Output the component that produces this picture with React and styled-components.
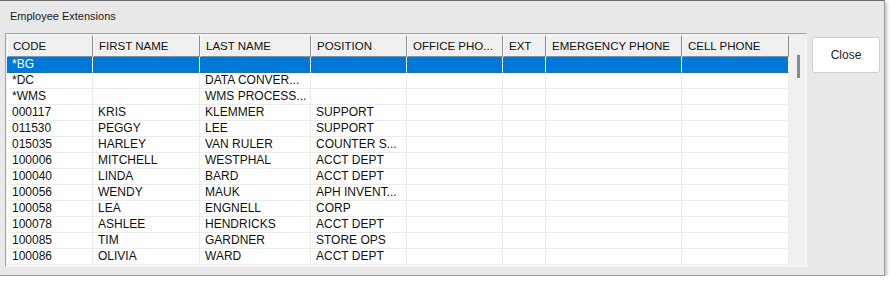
import React from 'react';
import styled, { createGlobalStyle } from 'styled-components';

const Global = createGlobalStyle`
  html, body { margin: 0; padding: 0; background: #ffffff; }
  body { font-family: "Liberation Sans", Arial, sans-serif; }
`;

const Window = styled.div`
  width: 884px;
  height: 274px;
  background: #e8e8e8;
  border-top: 1px solid #6e6e6e;
  border-right: 1px solid #9a9a9a;
  border-bottom: 1px solid #9a9a9a;
  box-shadow: 2px 2px 3px rgba(0, 0, 0, 0.25);
  display: flex;
  flex-direction: column;
`;

const Title = styled.div`
  height: 32px;
  padding-left: 10px;
  display: flex;
  align-items: center;
  font-size: 11px;
  color: #1a1a1a;
  box-sizing: border-box;
  padding-bottom: 3px;
`;

const Content = styled.div`
  display: flex;
  padding-left: 5px;
  gap: 5px;
`;

const Grid = styled.div`
  width: 802px;
  height: 234px;
  box-sizing: border-box;
  border: 1px solid #a3a3a3;
  border-right-color: #f6f6f6;
  border-bottom-color: #f6f6f6;
  background: #f0f0f0;
  display: flex;
  padding: 1px 0 0 1px;
`;

const TableArea = styled.div`
  width: 782px;
  display: flex;
  flex-direction: column;
  background: #fff;
`;

const HeaderRow = styled.div`
  display: flex;
  height: 22px;
  background: #f0f0f0;
`;

const HeaderCell = styled.div`
  width: ${p => p.w}px;
  box-sizing: border-box;
  border-right: 1px solid #8e8e8e;
  border-bottom: 1px solid #8e8e8e;
  border-top: 1px solid #fafafa;
  border-left: 1px solid #fafafa;
  padding-left: 5px;
  font-size: 11.5px;
  color: #111;
  display: flex;
  align-items: center;
  white-space: nowrap;
  overflow: hidden;
`;

const Row = styled.div`
  display: flex;
  height: 16px;
  background: ${p => (p.selected ? '#0078d7' : '#ffffff')};
  color: ${p => (p.selected ? '#ffffff' : '#111111')};
`;

const Cell = styled.div`
  width: ${p => p.w}px;
  box-sizing: border-box;
  border-right: 1px solid ${p => (p.selected ? '#ffffff' : '#ececec')};
  border-bottom: 1px solid ${p => (p.selected ? '#0078d7' : '#ececec')};
  padding-left: 5px;
  font-size: 12px;
  line-height: 15px;
  white-space: nowrap;
  overflow: hidden;
`;

const BottomStrip = styled.div`
  flex: 1;
  background: #ececec;
  border-top: 1px solid #f8f8f8;
`;

const VScroll = styled.div`
  width: 17px;
  background: #f0f0f0;
  position: relative;
`;

const Thumb = styled.div`
  position: absolute;
  left: 8px;
  top: 20px;
  width: 3px;
  height: 23px;
  background: #8a8a8a;
`;

const Side = styled.div`
  padding-top: 4px;
`;

const CloseButton = styled.button`
  width: 68px;
  height: 36px;
  background: #ffffff;
  border: 1px solid #cfcfcf;
  border-radius: 3px;
  font-family: "Liberation Sans", Arial, sans-serif;
  font-size: 12px;
  color: #222;
  padding: 0;
`;

const cols = [
  { name: 'CODE', w: 86 },
  { name: 'FIRST NAME', w: 107 },
  { name: 'LAST NAME', w: 111 },
  { name: 'POSITION', w: 96 },
  { name: 'OFFICE PHO...', w: 96 },
  { name: 'EXT', w: 43 },
  { name: 'EMERGENCY PHONE', w: 136 },
  { name: 'CELL PHONE', w: 107 },
];

const rows = [
  ['*BG', '', '', ''],
  ['*DC', '', 'DATA CONVER...', ''],
  ['*WMS', '', 'WMS PROCESS...', ''],
  ['000117', 'KRIS', 'KLEMMER', 'SUPPORT'],
  ['011530', 'PEGGY', 'LEE', 'SUPPORT'],
  ['015035', 'HARLEY', 'VAN RULER', 'COUNTER S...'],
  ['100006', 'MITCHELL', 'WESTPHAL', 'ACCT DEPT'],
  ['100040', 'LINDA', 'BARD', 'ACCT DEPT'],
  ['100056', 'WENDY', 'MAUK', 'APH INVENT...'],
  ['100058', 'LEA', 'ENGNELL', 'CORP'],
  ['100078', 'ASHLEE', 'HENDRICKS', 'ACCT DEPT'],
  ['100085', 'TIM', 'GARDNER', 'STORE OPS'],
  ['100086', 'OLIVIA', 'WARD', 'ACCT DEPT'],
];

export default function App() {
  return (
    <>
      <Global />
      <Window>
        <Title>Employee Extensions</Title>
        <Content>
          <Grid>
            <TableArea>
              <HeaderRow>
                {cols.map(c => (
                  <HeaderCell key={c.name} w={c.w}>{c.name}</HeaderCell>
                ))}
              </HeaderRow>
              {rows.map((r, i) => (
                <Row key={i} selected={i === 0}>
                  {cols.map((c, j) => (
                    <Cell key={c.name} w={c.w} selected={i === 0}>{r[j] || ''}</Cell>
                  ))}
                </Row>
              ))}
              <BottomStrip />
            </TableArea>
            <VScroll>
              <Thumb />
            </VScroll>
          </Grid>
          <Side>
            <CloseButton>Close</CloseButton>
          </Side>
        </Content>
      </Window>
    </>
  );
}
